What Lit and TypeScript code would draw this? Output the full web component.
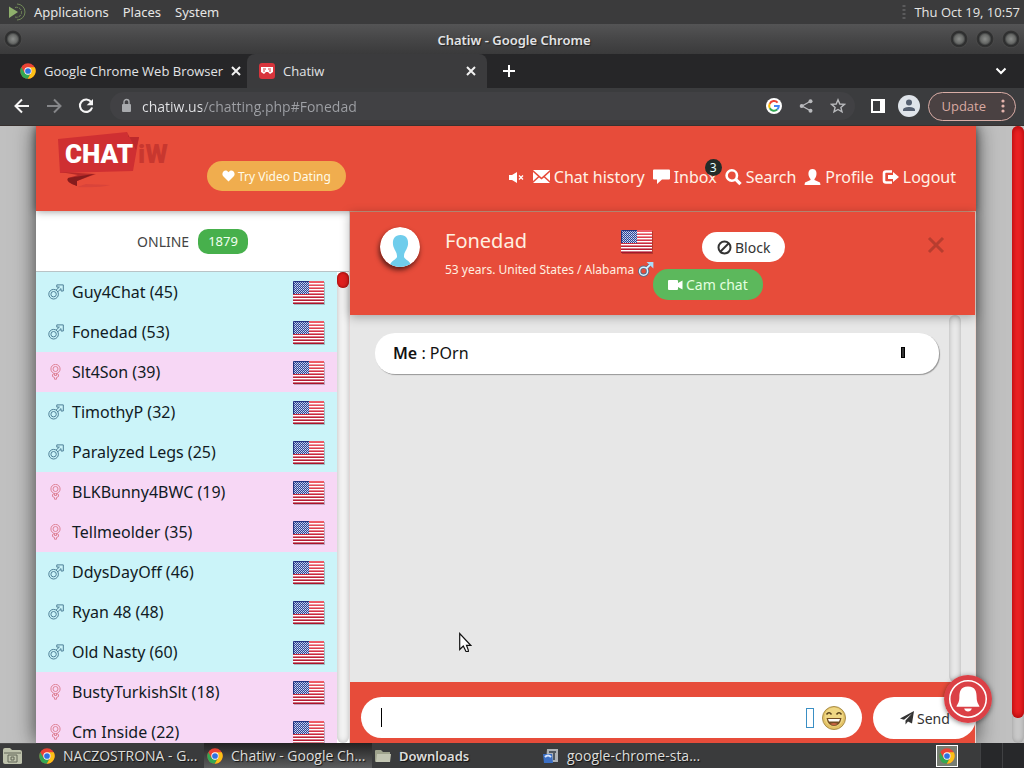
import { LitElement, html, css, svg } from "lit";
import { customElement, property } from "lit/decorators.js";
import { classMap } from "lit/directives/class-map.js";

interface Member { name: string; age: number; sex: "m" | "f"; }

const members: Member[] = [
  { name: "Guy4Chat", age: 45, sex: "m" },
  { name: "Fonedad", age: 53, sex: "m" },
  { name: "Slt4Son", age: 39, sex: "f" },
  { name: "TimothyP", age: 32, sex: "m" },
  { name: "Paralyzed Legs", age: 25, sex: "m" },
  { name: "BLKBunny4BWC", age: 19, sex: "f" },
  { name: "Tellmeolder", age: 35, sex: "f" },
  { name: "DdysDayOff", age: 46, sex: "m" },
  { name: "Ryan 48", age: 48, sex: "m" },
  { name: "Old Nasty", age: 60, sex: "m" },
  { name: "BustyTurkishSlt", age: 18, sex: "f" },
  { name: "Cm Inside", age: 22, sex: "f" },
];

const base = css`
  * { box-sizing: border-box; }
  :host { font-family: "Noto Sans", "Open Sans", sans-serif; }
  svg { display: block; flex: none; }
  button { font: inherit; color: inherit; border: 0; padding: 0; margin: 0; background: none; cursor: pointer; display: flex; align-items: center; }
  a { color: inherit; text-decoration: none; }
`;

const chrome = (s: number) => html`<svg width=${s} height=${s} viewBox="0 0 48 48" aria-hidden="true">
  <circle cx="24" cy="24" r="23" fill="#ea4335"/>
  <path d="M4 12.6 14 30 24 34.6 16 45.6A23 23 0 0 1 4 12.6z" fill="#34a853"/>
  <path d="M15 30 A11 11 0 0 0 33 30L23.5 47A23 23 0 0 1 4 35z" fill="#34a853"/>
  <path d="M24 13H44.2A23 23 0 0 1 23.4 47L33.6 29.5A11 11 0 0 0 24 13z" fill="#fbc116"/>
  <circle cx="24" cy="24" r="11" fill="#fff"/><circle cx="24" cy="24" r="8.6" fill="#2f72e0"/></svg>`;

const flag = html`<svg width="32" height="26" viewBox="0 -2 32 26" role="img" aria-label="United States">
  <defs><linearGradient id="cloth" x2="0" y2="1"><stop offset="0" stop-color="#f0606a"/><stop offset=".5" stop-color="#d22f43"/><stop offset="1" stop-color="#a8122a"/></linearGradient>
  <pattern id="stars" width="2" height="2" patternUnits="userSpaceOnUse"><rect width="2" height="2" fill="#2d4497"/><rect width="1" height="1" fill="#d3dcf0"/><rect x="1" y="1" width="1" height="1" fill="#a9b8de"/></pattern></defs>
  <rect x="1" y="1" width="31" height="23" fill="#000" opacity=".22"/>
  <rect width="31" height="23" fill="url(#cloth)"/>
  ${[2, 5, 8, 11, 14, 17, 20].map((y) => svg`<rect x="0" y=${y} width="31" height="1.4" fill="#fff"/>`)}
  <rect width="16" height="13" fill="url(#stars)"/><path d="M.5 13V.5H16" fill="none" stroke="#24337f"/></svg>`;

const male = html`<svg width="16" height="16" viewBox="0 0 16 16" role="img" aria-label="male">
  <g fill="none" stroke="#4d7f96"><circle cx="5.6" cy="10.2" r="4.8"/><circle cx="5.6" cy="10.2" r="2.7"/>
  <path d="M8 6.2 11.4 3.1H8.8V.9H15.3V7H13V4.6L9.7 7.9"/></g></svg>`;
const female = html`<svg width="16" height="16" viewBox="0 0 16 16" role="img" aria-label="female">
  <g fill="none" stroke="#df8296"><circle cx="7.5" cy="5" r="4.6"/><circle cx="7.5" cy="5" r="2.5"/>
  <path d="M6.5 9.5 4.5 10.5V12.5L6.5 13.500V15.2H8.5V13.500L10.500 12.5V10.5L8.5 9.5V11.500H6.500z"/></g></svg>`;
const maleBright = html`<svg width="16" height="16" viewBox="0 0 16 16" role="img" aria-label="male">
  <circle cx="5.6" cy="9.200" r="4" fill="none" stroke="#536e8a" stroke-width="3.2"/><path d="M8 6.500 14 1" stroke="#536e8a" stroke-width="3"/>
  <circle cx="5.6" cy="9.200" r="4" fill="none" stroke="#d8f1ff" stroke-width="1.5"/>
  <path d="M8.4 6.400 12 2.800" stroke="#d8f1ff" stroke-width="1.8"/><path d="M8.500 0H15.400V6.500z" fill="#a9dcfa"/></svg>`;

@customElement("desktop-panel")
class DesktopPanel extends LitElement {
  static styles = [base, css`
    :host { display: block; background: #3b3b3c; color: #e6e6e4; font-size: 13px; line-height: 24px; }
    .row { display: flex; align-items: center; height: 24px; padding: 0 4px 0 8px; }
    .menus { display: flex; gap: 14px; flex: 1; align-items: center; }
    .menus svg { margin-right: -7px; }
    .clock { display: flex; gap: 8px; align-items: center; font-family: "Open Sans", sans-serif; }
  `];
  render() {
    return html`<div class="row"><nav class="menus">
      <svg width="19" height="18" viewBox="0 0 19 18" aria-hidden="true"><path d="M1 3.5 10 9 1 15z" fill="#8fb06c"/><g fill="none" stroke="#718958"><path d="M9 1A8 8 0 0 1 9 17"/><path d="M7 4.5A5 5 0 1 1 7 14" stroke-dasharray="3 1"/></g></svg>
      <button>Applications</button><button>Places</button><button>System</button></nav>
      <div class="clock"><svg width="4" height="18" viewBox="0 0 4 18" aria-hidden="true"><path d="M2 2V17" stroke="#5b5b5c" stroke-width="3" stroke-dasharray="2 2"/></svg><time>Thu Oct 19, 10:57</time></div></div>`;
  }
}

@customElement("browser-frame")
class BrowserFrame extends LitElement {
  static styles = [base, css`
    :host { display: block; color: #e2e3e5; font-size: 13px; }
    .title { display: grid; grid-template-columns: 88px 1fr 84px; align-items: center; height: 30px; padding: 0 4px; background: linear-gradient(#545455, #464647 50%, #3a3a3b); }
    h1 { margin: 0; font-size: 13px; line-height: 22px; padding-top: 2px; font-weight: 600; text-align: center; text-shadow: 1px 1px 1px #222; }
    .orb { width: 18px; height: 18px; border-radius: 50%; background: radial-gradient(circle at 50% 50%, #8b8d8b 0, #666866 35%, #2c2d2e 52%, #333 62%, #555 72%); }
    .orbs { display: flex; gap: 8px; justify-content: flex-end; }
    .tabs { display: flex; align-items: center; height: 34px; background: #262628; font-family: "Open Sans", sans-serif; }
    .tab { display: flex; align-items: center; height: 34px; gap: 8px; width: 240px; padding: 0 11px 0 12px; }
    .first { width: 247px; padding-left: 20px; }
    .tab span { flex: 1; white-space: nowrap; }
    .active { background: #3b3b3d; border-radius: 8px 8px 0 0; }
    .plus { padding: 0 15px; flex: 1; }
    .more { padding: 0 17px; }
    .bar { display: flex; align-items: center; height: 38px; padding: 0 8px 1px 14px; background: #3b3c3e; border-bottom: 1px solid #37312f; font-family: "Open Sans", sans-serif; }
    .navs { display: flex; gap: 16px; padding-right: 16px; }
    .omni { flex: 1; display: flex; align-items: center; height: 28px; padding: 0 9px 0 8px; border-radius: 14px; background: #414144; gap: 8px; }
    .url { flex: 1; min-width: 0; height: 24px; border: 0; padding: 0; outline: 0; font: inherit; font-size: 14px; color: transparent; background: linear-gradient(90deg, #e4e5e8 60px, #9fa1a6 60px); -webkit-background-clip: text; background-clip: text; }
    .tools { display: flex; gap: 16px; }
    .end { display: flex; align-items: center; gap: 12px; padding-left: 15px; }
    .end .update { margin-left: -4px; height: 29px; gap: 13px; padding: 0 8px 0 12px; border: 1px solid #d9ada6; border-radius: 15px; background: #4a4142; color: #d9a9a1; }
  `];
  render() {
    const x = html`<svg width="10" height="10" viewBox="0 0 10 10" aria-hidden="true"><path d="M1 1 9 9M9 1 1 9" stroke="#f1f1f1" stroke-width="2"/></svg>`;
    return html`
      <header class="title"><button class="orb" aria-label="Window menu"></button><h1>Chatiw - Google Chrome</h1>
        <div class="orbs"><button class="orb" aria-label="Minimize"></button><button class="orb" aria-label="Maximize"></button><button class="orb" aria-label="Close"></button></div></header>
      <div class="tabs">
        <div class="tab first">${chrome(16)}<span>Google Chrome Web Browser</span><button aria-label="Close tab">${x}</button></div>
        <div class="tab active"><svg width="16" height="16" viewBox="0 0 16 16" aria-hidden="true"><rect width="16" height="16" rx="3" fill="#d8343c"/><path d="M2 4H14V9L11 11 9 9H7L5 11 2 9z" fill="#fff"/><path d="M4 6H7M9 6H12M4 8H6M10 8H12" stroke="#d8343c"/></svg><span>Chatiw</span><button aria-label="Close tab">${x}</button></div>
        <button class="plus" aria-label="New tab"><svg width="14" height="14" viewBox="0 0 14 14"><path d="M7 1V13M1 7H13" stroke="#fff" stroke-width="2"/></svg></button>
        <button class="more" aria-label="Search tabs"><svg width="12" height="8" viewBox="0 0 12 8"><path d="M1.5 1.5 6 6 10.5 1.5" fill="none" stroke="#fff" stroke-width="2"/></svg></button>
      </div>
      <div class="bar">
        <div class="navs">
          <button aria-label="Back"><svg width="16" height="16" viewBox="0 0 16 16"><path d="M15 8H2M8 1.5 1.5 8 8 14.5" fill="none" stroke="#f5f5f5" stroke-width="2"/></svg></button>
          <button aria-label="Forward"><svg width="16" height="16" viewBox="0 0 16 16"><path d="M1 8H14M8 1.5 14.5 8 8 14.5" fill="none" stroke="#858689" stroke-width="2"/></svg></button>
          <button aria-label="Reload"><svg width="16" height="16" viewBox="0 0 16 16"><path d="M13.3 4.2A6.2 6.2 0 1 0 14.1 9.5" fill="none" stroke="#f5f5f5" stroke-width="2.1"/><path d="M15 1V7.3H8.7z" fill="#f5f5f5"/></svg></button>
        </div>
        <div class="omni">
          <svg width="16" height="16" viewBox="0 0 16 16" aria-hidden="true"><rect x="4" y="6" width="9" height="8" rx="1" fill="#a8aaad"/><path d="M6 6V4A2.5 2.5 0 0 1 11 4V6" fill="none" stroke="#a8aaad" stroke-width="1.4"/></svg>
          <input class="url" aria-label="Address" .value=${"chatiw.us/chatting.php#Fonedad"} />
          <div class="tools">
            <button aria-label="Google"><svg width="16" height="16" viewBox="0 0 16 16"><circle cx="8" cy="8" r="8" fill="#fff"/><g fill="none" stroke-width="2"><path d="M11.6 4.6A4.8 4.8 0 0 0 3.7 5.8" stroke="#ea4335"/><path d="M3.7 5.8A4.8 4.8 0 0 0 3.8 10.3" stroke="#fbbc05"/><path d="M3.8 10.3A4.8 4.8 0 0 0 11.2 11.6" stroke="#34a853"/><path d="M11.2 11.6A4.8 4.8 0 0 0 12.8 8H8" stroke="#4285f4"/></g></svg></button>
            <button aria-label="Share"><svg width="16" height="16" viewBox="0 0 16 16"><path d="M13 3 4 8 13 13" fill="none" stroke="#b9babd" stroke-width="1.3"/><circle cx="12.5" cy="3.2" r="2" fill="#b9babd"/><circle cx="3.7" cy="8" r="2" fill="#b9babd"/><circle cx="12.5" cy="12.8" r="2" fill="#b9babd"/></svg></button>
            <button aria-label="Bookmark"><svg width="16" height="16" viewBox="0 0 16 16"><path d="M8 1.8 9.8 6 14.4 6.4 10.9 9.4 12 13.9 8 11.5 4 13.9 5.1 9.4 1.6 6.4 6.2 6z" fill="none" stroke="#b9babd" stroke-width="1.4"/></svg></button>
          </div>
        </div>
        <div class="end">
          <button aria-label="Side panel"><svg width="16" height="16" viewBox="0 0 16 16"><path d="M1 1H15V15H1zM3 3V13H10V3z" fill="#fff" fill-rule="evenodd"/></svg></button>
          <button aria-label="Account"><svg width="22" height="22" viewBox="0 0 22 22"><circle cx="11" cy="11" r="11" fill="#dfe4ea"/><circle cx="11" cy="7.5" r="3" fill="#555f70"/><path d="M5 16V15C5 12.8 8.5 12 11 12S17 12.8 17 15V16z" fill="#555f70"/></svg></button>
          <button class="update">Update<svg width="8" height="16" viewBox="0 0 8 16" aria-hidden="true"><g fill="#e4b4ac"><circle cx="4" cy="3" r="1.6"/><circle cx="4" cy="8" r="1.6"/><circle cx="4" cy="13" r="1.6"/></g></svg></button>
        </div>
      </div>`;
  }
}

@customElement("site-header")
class SiteHeader extends LitElement {
  static styles = [base, css`
    :host { display: block; position: relative; background: #e74c3a; color: #fff2e6; font-size: 16px; box-shadow: 0 0 8px rgba(0,0,0,.45); }
    .row { display: flex; height: 85px; padding: 0 20px; align-items: flex-start; }
    .logo { padding-top: 4px; }
    .try { margin: 35px auto 0 35px; height: 30px; padding: 0 15px; gap: 3px; border-radius: 15px; background: #f0ad4e; color: #fffbe9; font-size: 12px; }
    nav { display: flex; gap: 8px; padding-top: 40px; line-height: 22px; }
    nav a { display: flex; align-items: center; gap: 4px; position: relative; }
    .badge { position: absolute; right: -5px; top: -7px; width: 17px; height: 17px; line-height: 17px; border-radius: 50%; background: #232c29; color: #e8ffff; text-align: center; font-size: 12px; }
    .logotext { font: 900 26px Roboto, sans-serif; }
  `];
  render() {
    const i = (body: unknown) => html`<svg width="17" height="17" viewBox="0 0 17 17" fill="#fff" aria-hidden="true">${body}</svg>`;
    return html`<div class="row">
      <a class="logo" href="#" aria-label="Chatiw"><svg width="116" height="60" viewBox="0 0 116 60">
        <path d="M2 9 71 2 72 7 83 7 77 41 4 43z" fill="#cf2f32"/><path d="M71 2 72 7 83 7 80 20z" fill="#bd292c"/>
        <path d="M4 42 40 44 21 51 21 56Q9 52 12 48L22 45z" fill="#b82a29"/><path d="M12 48 38 44 21 51 21 56Q9 52 12 48z" fill="#861c1d"/><path d="M21 57Q44 58 54 55L30 54z" fill="#d9443a"/>
        <text class="logotext" x="9" y="33" fill="#fff">CHAT</text><text class="logotext" x="82" y="33" fill="#c8372f">iW</text></svg></a>
      <button class="try"><svg width="13" height="12" viewBox="0 0 13 12" aria-hidden="true"><path d="M6.5 11.5 1 6C-1.3 2.5 3.5-1.8 6.5 2.2 9.5-1.8 14.3 2.5 12 6z" fill="#fff"/></svg>Try Video Dating</button>
      <nav>
        <a href="#" aria-label="Mute">${i(svg`<path d="M1 6H4L9 3V14L4 11H1z"/><path d="M11 6.5 15 10.5M15 6.5 11 10.5" stroke="#fff" stroke-width="1.3"/>`)}</a>
        <a href="#">${i(svg`<path d="M0 1H17L8.500 8.500zM0 3V12L5 7.500zM17 3V12L12 7.500zM0 14 6 8.500 8.500 10.500 11 8.500 17 14z"/>`)}Chat history</a>
        <a href="#">${i(svg`<path d="M1 .500H16Q17 .500 17 1.500V9.500Q17 10.500 16 10.500H9L4 15V10.500H1Q0 10.500 0 9.500V1.500Q0 .500 1 .500z"/>`)}Inbox<span class="badge">3</span></a>
        <a href="#">${i(svg`<circle cx="6.800" cy="6.500" r="5.200" fill="none" stroke="#fff" stroke-width="2.600"/><path d="M10.500 10.200 15.500 15.200" stroke="#fff" stroke-width="3.300"/>`)}Search</a>
        <a href="#">${i(svg`<path d="M8.500 0C13 0 13 5 12 7.500 11 10 10 10 10.500 11L16 13.500 16.500 16H.5L1 13.500 6.500 11C7 10 6 10 5 7.500 4 5 4 0 8.500 0z"/>`)}Profile</a>
        <a href="#">${i(svg`<path d="M10 2.500H4Q2 2.500 2 4.500V11.500Q2 13.500 4 13.500H10" fill="none" stroke="#fff" stroke-width="2.600"/><path d="M6 6H11V3L17 8 11 13V10H6z"/>`)}Logout</a>
      </nav></div>`;
  }
}

@customElement("member-list")
class MemberList extends LitElement {
  @property({ attribute: false }) members: Member[] = [];
  static styles = [base, css`
    :host { display: flex; flex-direction: column; min-height: 0; background: #fff; color: #111b24; font-size: 16px; border-right: 1px solid #e0d5d5; }
    .head { display: flex; height: 61px; flex: none; align-items: center; justify-content: center; gap: 9px; font-size: 14px; color: #444; border-bottom: 1px solid #b9c3c6; }
    .count { background: #47b04c; color: #f1fff1; border-radius: 10px; line-height: 25px; padding: 0 10px; font-size: 13px; }
    .scroll { display: flex; flex: 1; min-height: 0; overflow: hidden; }
    ul { list-style: none; margin: 0; padding: 0; flex: 1; }
    a { display: flex; align-items: center; height: 40px; padding: 0 12px 0 12px; gap: 8px; background: #cbf4f9; }
    .f { background: #f7d7f5; }
    a span { flex: 1; }
    .track { width: 12px; background: #f2f2f2; border-radius: 6px; box-shadow: inset 0 0 5px #bbb; }
    .thumb { height: 16px; border-radius: 6px; background: #e3201f; box-shadow: inset 0 0 3px #700; }
  `];
  render() {
    return html`<div class="head"><span>ONLINE</span><span class="count">1879</span></div>
      <div class="scroll"><ul>${this.members.map((m) => html`<li><a href="#" class=${classMap({ f: m.sex === "f" })}>${m.sex === "m" ? male : female}<span>${m.name} (${m.age})</span>${flag}</a></li>`)}</ul>
      <div class="track"><div class="thumb"></div></div></div>`;
  }
}

@customElement("chat-room")
class ChatRoom extends LitElement {
  static styles = [base, css`
    :host { display: flex; flex-direction: column; min-width: 0; min-height: 0; background: #e7e7e7; border-top: 1px solid #f7b89c; border-right: 1px solid #eed9d2; color: #111; font-size: 16px; }
    .head { position: relative; display: flex; flex: none; height: 103px; padding: 15px 30px 0; background: #e74c3a; color: #fff0e0; box-shadow: 0 2px 10px rgba(0,0,0,.3); }
    .face { border-radius: 50%; box-shadow: -1px 3px 5px rgba(30,10,10,.7); }
    .who { width: 208px; margin-left: 25px; }
    .line { display: flex; align-items: center; justify-content: space-between; height: 28px; }
    .who h2 { margin: 0; font-size: 20px; line-height: 28px; font-weight: 400; }
    .who p { display: flex; align-items: center; gap: 4px; margin: 0; font-size: 12px; line-height: 30px; white-space: nowrap; }
    .acts { display: flex; flex-direction: column; align-items: flex-start; gap: 7px; padding-top: 5px; flex: 1; font-size: 14px; }
    .acts button { height: 31px; border-radius: 15px; gap: 3px; padding: 0 15px; white-space: nowrap; }
    .acts .block { height: 30px; margin-left: 49px; background: #fff; color: #333; }
    .acts .cam { background: #5cb85c; color: #e4ffe0; }
    .close { height: 36px; }
    .log { flex: 1; display: flex; min-height: 0; padding: 0 14px 0 25px; gap: 10px; }
    .msgs { flex: 1; padding-top: 18px; }
    .msg { display: flex; align-items: center; justify-content: space-between; height: 41px; padding: 0 34px 2px 18px; border-radius: 20px; background: #fff; box-shadow: 1px 1px 1px rgba(0,0,0,.35); }
    .msg b { font-weight: 600; }
    .tick { width: 4px; height: 11px; background: #333; border: 1px solid #000; }
    .track { width: 12px; border-radius: 6px; background: #e9e9e9; box-shadow: inset 0 0 5px #aaa; }
    form { display: flex; flex: none; gap: 11px; height: 61px; padding: 15px 0 4px 11px; background: #e74c3a; }
    .box { flex: 1; display: flex; align-items: center; gap: 7px; height: 41px; padding: 0 15px 0 20px; margin: 0; border-radius: 21px; background: #fff; }
    .caret { width: 1px; height: 19px; background: #000; }
    .box input { flex: 1; min-width: 0; border: 0; outline: 0; font: inherit; background: none; }
    .missing { width: 8px; height: 20px; border: 1px solid #3a8fc4; }
    .send { width: 103px; height: 42px; padding-left: 27px; gap: 3px; border-radius: 21px; background: #fff; color: #333; font-size: 14px; margin-right: -1px; }
  `];
  render() {
    return html`
      <header class="head">
        <svg class="face" width="40" height="40" viewBox="0 0 40 40" role="img" aria-label="Fonedad"><defs><clipPath id="round"><circle cx="20" cy="20" r="20"/></clipPath></defs><g clip-path="url(#round)"><rect width="40" height="40" fill="#fff"/><path d="M20.500 8C29 8 29 17 27 21 25.500 25 24 25 24 30 25 33 30 33 32 40H9C11 33 16 33 17 30 17 25 15.500 25 14 21 12 17 12 8 20.500 8z" fill="#6fcdec"/></g></svg>
        <div class="who"><div class="line"><h2>Fonedad</h2>${flag}</div><p>53 years. United States / Alabama ${maleBright}</p></div>
        <div class="acts">
          <button class="block"><svg width="15" height="15" viewBox="0 0 15 15" aria-hidden="true"><circle cx="7.500" cy="7.500" r="6" fill="none" stroke="#333" stroke-width="2"/><path d="M3.500 11.500 11.500 3.500" stroke="#333" stroke-width="2"/></svg>Block</button>
          <button class="cam"><svg width="15" height="12" viewBox="0 0 15 12" aria-hidden="true"><path d="M0 2Q0 1 1 1H9Q10 1 10 2V4L14.500 1.500V10.500L10 8V10Q10 11 9 11H1Q0 11 0 10z" fill="#fff"/></svg>Cam chat</button>
        </div>
        <button class="close" aria-label="Close chat"><svg width="18" height="18" viewBox="0 0 18 18"><path d="M2 2 16 16M16 2 2 16" stroke="#b83d2f" stroke-width="3"/></svg></button>
      </header>
      <div class="log"><div class="msgs"><div class="msg"><span><b>Me</b> : POrn</span><span class="tick"></span></div></div><div class="track"></div></div>
      <form @submit=${(e: Event) => e.preventDefault()}>
        <div class="box"><span class="caret"></span><input aria-label="Message" /><span class="missing"></span>
          <button type="button" aria-label="Emoji"><svg width="26" height="26" viewBox="0 0 26 26"><circle cx="13" cy="13" r="11.500" fill="#e3c266" stroke="#a98f4c"/><circle cx="13" cy="12" r="9.500" fill="#efd784"/><path d="M5.500 9.500Q8 6 10.500 9.500M15.500 9.500Q18 6 20.500 9.500" fill="none" stroke="#5a431c" stroke-width="1.600"/><path d="M5.500 13H20.500Q19 21 13 21T5.500 13z" fill="#704c22"/><path d="M7 14H19L18 16.500H8z" fill="#fff"/><path d="M9 19Q13 17 17 19L13 20.500z" fill="#c96443"/></svg></button></div>
        <button class="send"><svg width="14" height="14" viewBox="0 0 14 14" aria-hidden="true"><path d="M14 0 12 12.500 8 10.500 5.500 13.500V9.500L12 2.500 4 8.800 0 7.500z" fill="#333"/></svg>Send</button>
      </form>`;
  }
}

@customElement("task-bar")
class TaskBar extends LitElement {
  static styles = [base, css`
    :host { display: block; background: #3a3b3c; color: #dededc; font-size: 14px; }
    .row { display: flex; align-items: stretch; height: 25px; }
    .show { padding: 0 14px 0 3px; border-top: 1px solid #4b4b4c; }
    .task { width: 168px; gap: 8px; padding: 0 3px; white-space: nowrap; font-family: "Open Sans", sans-serif; text-shadow: 1px 1px 1px #111; }
    .current { background: linear-gradient(#222, #5c5d5e); }
    .bold { font: 600 13px "Noto Sans", sans-serif; }
    .tray { display: flex; margin-left: auto; }
    .tray button { align-self: center; border: 1px solid #fff; background: #777e73; padding: 2px; margin-right: 22px; }
    .cell { width: 22px; background: #27282a; border-left: 1px solid #404143; }
  `];
  render() {
    const folder = html`<svg width="16" height="16" viewBox="0 0 16 16" aria-hidden="true"><path d="M0 3Q0 2 1 2H6L8 4H15V14H1Q0 14 0 13z" fill="#9fa38d"/><path d="M2 6H16L15 14H1z" fill="#c2c5b2"/></svg>`;
    return html`<div class="row">
      <button class="show" aria-label="Show desktop"><svg width="19" height="18" viewBox="0 0 19 18"><path d="M0 3Q0 1 2 1H7L9 3H17Q19 3 19 5V16Q19 17 17 17H2Q0 17 0 15z" fill="#bdc1ab"/><path d="M1 6H18M5 8H14V15H5zM8 10H11V13H8z" fill="none" stroke="#626758"/></svg></button>
      <button class="task">${chrome(16)}NACZOSTRONA - G...</button>
      <button class="task current">${chrome(16)}Chatiw - Google Ch...</button>
      <button class="task bold">${folder}Downloads</button>
      <button class="task"><svg width="16" height="16" viewBox="0 0 16 16" aria-hidden="true"><path d="M4 1H15V14H3z" fill="#aeb2b5"/><path d="M6 4H13M11 4V12" stroke="#505860" stroke-width="2"/><path d="M0 6H9L10 15H1z" fill="#3b6fc4"/><path d="M2 9Q5 6 8 9" stroke="#dbe8ff" fill="none" stroke-width="2"/></svg>google-chrome-sta...</button>
      <div class="tray"><button aria-label="Chrome">${chrome(16)}</button><span class="cell"></span><span class="cell"></span></div></div>`;
  }
}

@customElement("app-root")
class AppRoot extends LitElement {
  static styles = [base, css`
    :host { display: flex; flex-direction: column; height: 100vh; overflow: hidden; }
    .page { position: relative; flex: 1; display: flex; min-height: 0; background: #c0c0c0; overflow: hidden; }
    .centre { flex: 1; display: flex; padding: 0 36px; min-width: 0; }
    .site { flex: 1; display: flex; flex-direction: column; max-width: 940px; margin: 0 auto; min-width: 0; box-shadow: 0 0 20px rgba(20,20,20,.75); }
    .cols { flex: 1; display: grid; grid-template-columns: 314fr 626fr; grid-template-rows: minmax(0, 1fr); min-height: 0; }
    .track { width: 12px; border-radius: 6px; background: #c9c9c9; box-shadow: inset 0 0 5px #999; }
    .thumb { height: 96%; border-radius: 6px; background: #ee2225; box-shadow: inset 0 0 6px #900; }
    .bell { position: absolute; right: 32px; bottom: 20px; border-radius: 50%; box-shadow: 0 1px 5px rgba(0,0,0,.5); }
    .mouse { position: absolute; left: 459px; bottom: 90px; }
  `];
  render() {
    return html`<desktop-panel></desktop-panel><browser-frame></browser-frame>
      <main class="page">
        <div class="centre"><div class="site"><site-header></site-header>
          <div class="cols"><member-list .members=${members}></member-list><chat-room></chat-room></div></div></div>
        <div class="track"><div class="thumb"></div></div>
        <button class="bell" aria-label="Notifications"><svg width="48" height="48" viewBox="0 0 50 50"><circle cx="25" cy="25" r="25" fill="#db4046"/><circle cx="25" cy="25" r="19" fill="none" stroke="#fff" stroke-width="1.600"/><path d="M25 12C33 12 34 18 34 23 34 29 36 30 37 33H13C14 30 16 29 16 23 16 18 17 12 25 12zM21 35H29Q28 38 25 38T21 35z" fill="#fff"/></svg></button>
        <svg class="mouse" width="13" height="21" viewBox="0 0 13 21" aria-hidden="true"><path d="M.7 1.500V17.500L4.300 14 7 19.500H9.300V18L7.500 13.300H11.700z" fill="#fff" stroke="#111" stroke-width="1.200"/></svg>
      </main><task-bar></task-bar>`;
  }
}
